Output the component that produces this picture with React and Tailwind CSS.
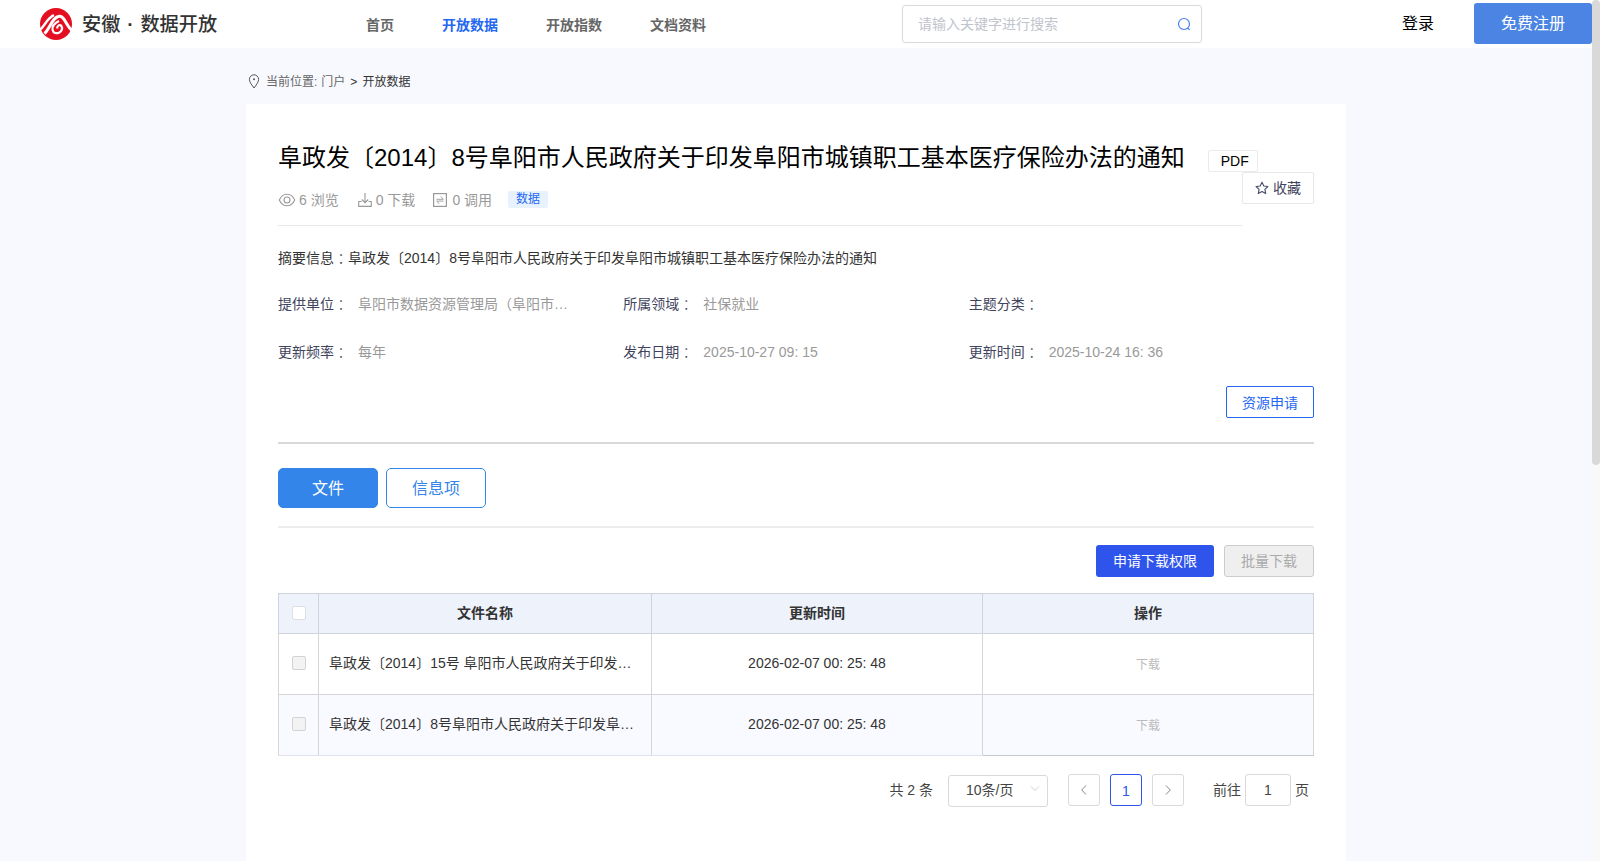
import React, { useState } from 'react';
import clsx from 'clsx';

const navItems = ['首页', '开放数据', '开放指数', '文档资料'];

const details = [
  { label: '提供单位', value: '阜阳市数据资源管理局（阜阳市…' },
  { label: '所属领域', value: '社保就业' },
  { label: '主题分类', value: '' },
  { label: '更新频率', value: '每年' },
  { label: '发布日期', value: '2025-10-27 09: 15' },
  { label: '更新时间', value: '2025-10-24 16: 36' },
];

const files = [
  {
    id: 1,
    name: '阜政发〔2014〕15号 阜阳市人民政府关于印发…',
    time: '2026-02-07 00: 25: 48',
  },
  {
    id: 2,
    name: '阜政发〔2014〕8号阜阳市人民政府关于印发阜…',
    time: '2026-02-07 00: 25: 48',
  },
];

function Logo() {
  return (
    <svg className="w-8 h-8 shrink-0" viewBox="0 0 32 32" fill="none">
      <circle cx="16" cy="16" r="16" fill="#e40f20" />
      <path d="M-1 22.500C4.500 19 6.500 10.500 14 7.200" stroke="#fff" strokeWidth="2.400" />
      <path
        d="M4.500 25.500C9.500 21.500 12.500 8.800 19.300 8.300C25 8 25.500 17.500 33 23.500"
        stroke="#fff"
        strokeWidth="3"
      />
      <path
        d="M19 13C15 15 11.800 18.500 12.600 22C13.300 25.200 16.500 25.800 19 24.700C22 23.400 22.800 20 21.300 17.800C19.800 16.200 17 17.300 17.200 20.500"
        stroke="#fff"
        strokeWidth="2.200"
      />
    </svg>
  );
}

function SearchIcon() {
  return (
    <svg className="w-3.5 h-3.5" viewBox="0 0 14 14" fill="none" stroke="#3f7bf2" strokeWidth="1.1">
      <circle cx="7" cy="7" r="5.500" />
      <path d="M10.500 11L12.700 12.900" />
    </svg>
  );
}

function PinIcon() {
  return (
    <svg className="w-3 h-[15px]" viewBox="0 0 12 15" fill="none" stroke="#555" strokeWidth="1">
      <path d="M6 14C4 11.200 1.400 8.200 1.400 5.400a4.600 4.600 0 0 1 9.200 0C10.600 8.200 8 11.200 6 14Z" />
      <circle cx="6" cy="5.300" r="1" fill="#555" stroke="none" />
    </svg>
  );
}

function EyeIcon() {
  return (
    <svg className="w-[18px] h-3.5" viewBox="0 0 18 14" fill="none" stroke="#999" strokeWidth="1.1">
      <path d="M1.300 7C3 3.200 5.800 1.200 9 1.200S15 3.200 16.700 7C15 10.800 12.200 12.800 9 12.800S3 10.800 1.300 7Z" />
      <circle cx="9" cy="7" r="3" />
    </svg>
  );
}

function DownloadIcon() {
  return (
    <svg className="w-3.5 h-3.5" viewBox="0 0 14 14" fill="none" stroke="#999" strokeWidth="1.1">
      <path d="M7 0V9.500M3.800 6.500L7 9.700L10.200 6.500M3.500 8.500H0.700V13.400H13.300V8.500H10.500" />
    </svg>
  );
}

function CallIcon() {
  return (
    <svg className="w-3.5 h-3.5" viewBox="0 0 14 14" fill="none" stroke="#999">
      <rect x="0.600" y="0.600" width="12.800" height="12.800" strokeWidth="1.200" />
      <path d="M3.500 6.300H10.300L7.800 3.500M10.500 8.100H3.700L6.200 10.900" strokeWidth="0.9" />
    </svg>
  );
}

function StarIcon() {
  return (
    <svg className="w-3.5 h-3.5" viewBox="0 0 14 14" fill="none" stroke="#454a66" strokeWidth="1.1" strokeLinejoin="round">
      <path d="M7 1.300L8.800 5L12.900 5.500L9.900 8.300L10.700 12.400L7 10.600L3.300 12.400L4.100 8.300L1.100 5.500L5.200 5Z" />
    </svg>
  );
}

function Chevron({ d, className }) {
  return (
    <svg className={clsx('w-3 h-3', className)} viewBox="0 0 12 12" fill="none" stroke="currentColor">
      <path d={d} />
    </svg>
  );
}

// The TC face sets the fullwidth colon in the middle of its box
function Colon() {
  return <span className="relative top-px font-['Noto_Sans_CJK_TC',sans-serif] font-light leading-none">：</span>;
}

function Checkbox({ disabled }) {
  return (
    <span
      className={clsx(
        'block w-3.5 h-3.5 rounded-[2px] border',
        disabled ? 'bg-[#f3f3f3] border-[#d3d3d3]' : 'bg-white border-[#dcdfe6]'
      )}
    />
  );
}

function Header() {
  return (
    <header className="flex h-12 bg-white">
      <div className="flex items-center w-[366px] pl-10">
        <Logo />
        <div className="flex ml-[10px] pt-px text-[19.2px] leading-6 font-medium text-[#333]">
          <span>安徽</span>
          <span className="w-5 text-center font-bold">·</span>
          <span>数据开放</span>
        </div>
      </div>
      <nav className="flex gap-12 w-[536px] pt-[15px] text-sm leading-5 font-bold text-[#666]">
        {navItems.map((item) => (
          <a key={item} className={clsx(item === '开放数据' && 'text-[#2468f2]')}>
            {item}
          </a>
        ))}
      </nav>
      <div className="flex items-center justify-between w-[300px] h-[38px] mt-[5px] pl-[15px] pr-2.5 border border-[#d9d9d9] rounded-[3px]">
        <span className="text-sm leading-5 text-[#c0c4cc]">请输入关键字进行搜索</span>
        <SearchIcon />
      </div>
      <div className="flex ml-auto text-base">
        <a className="mr-10 leading-[48px] text-black">登录</a>
        <button className="w-[118px] h-[41px] mt-[3px] rounded-[3px] bg-[#4b84e2] text-white">免费注册</button>
      </div>
    </header>
  );
}

function Summary() {
  return (
    <div className="flex items-start">
      <div className="w-[964px] h-[90px] shrink-0 border-b border-[#e8e8e8]">
        <div className="flex h-9 whitespace-nowrap">
          <h1 className="text-2xl leading-[44px] text-black">
            阜政发〔2014〕8号阜阳市人民政府关于印发阜阳市城镇职工基本医疗保险办法的通知
          </h1>
          <span className="ml-[23px] mt-[14px] w-[50px] h-[22px] shrink-0 pl-3 border border-[#ebebeb] rounded-[2px] text-sm leading-5 text-black">
            PDF
          </span>
        </div>
        <div className="flex items-center h-5 mt-[18px] text-sm leading-5 text-[#999]">
          <EyeIcon />
          <span className="ml-[3px]">6 浏览</span>
          <span className="ml-[19px]"><DownloadIcon /></span>
          <span className="ml-1">0 下载</span>
          <span className="ml-[18px]"><CallIcon /></span>
          <span className="ml-[5px]">0 调用</span>
          <span className="ml-4 mb-[2px] w-10 h-[17px] rounded-[2px] bg-[#e8f2ff] text-xs leading-[17px] text-center text-[#2468f2]">
            数据
          </span>
        </div>
      </div>
      <button className="flex items-center justify-center gap-1 w-[72px] h-8 mt-9 border border-[#e8e8e8] rounded-[2px] text-sm text-[#3f445e]">
        <StarIcon />
        收藏
      </button>
    </div>
  );
}

function FileTable() {
  return (
    <table className="w-full mt-4 table-fixed border-collapse text-sm text-[#333]">
      <colgroup>
        <col className="w-10" />
        <col className="w-[333px]" />
        <col className="w-[331px]" />
        <col />
      </colgroup>
      <thead>
        <tr className="h-10 bg-[#edf2fb]">
          <th className="border border-[#d0d3d9] pl-[13px] pb-[2px]"><Checkbox /></th>
          <th className="border border-[#d0d3d9] pb-[2px]">文件名称</th>
          <th className="border border-[#d0d3d9] pb-[2px]">更新时间</th>
          <th className="border border-[#d0d3d9] pb-[2px]">操作</th>
        </tr>
      </thead>
      <tbody>
        {files.map((file, index) => {
          const last = index === files.length - 1;
          const cell = clsx('border border-[#d6d6d8] pb-[2px]', last && 'border-b-[#dfe2ee]');

          return (
            <tr key={file.id} className="h-[61px] even:bg-[#f9faff]">
              <td className={clsx(cell, 'pl-[13px]')}><Checkbox disabled /></td>
              <td className={clsx(cell, 'pl-2.5 whitespace-nowrap')}>{file.name}</td>
              <td className={clsx(cell, 'text-center')}>{file.time}</td>
              <td
                className={clsx(
                  'border border-[#d6d6d8] pt-[2px] text-center text-xs text-[#bbb]',
                  last && 'border-b-[#c6c8d0]'
                )}
              >
                下载
              </td>
            </tr>
          );
        })}
      </tbody>
    </table>
  );
}

function Pagination() {
  const box = 'flex items-center justify-center h-8 border rounded-[3px]';

  return (
    <div className="flex justify-end h-[33px] mt-[18px] pr-[5px] text-sm leading-8 text-[#444]">
      <span className="mr-[15px]">共 2 条</span>
      <div className="flex justify-between w-[100px] h-8 mt-px mr-5 pl-[17px] pr-[6px] border border-[#d9d9d9] rounded-[3px]">
        <span className="leading-7">10条/页</span>
        <Chevron d="M2 3.500L6 7.500L10 3.500" className="mt-[7px] text-[#ccd0d8]" />
      </div>
      <div className="flex gap-2.5 mr-[29px]">
        <button className={clsx(box, 'w-8 border-[#d9d9d9] text-[#888]')}>
          <Chevron d="M8 1.500L3.700 6L8 10.500" />
        </button>
        <button className={clsx(box, 'w-8 pt-[2px] border-[#2f54eb] text-[#2f54eb]')}>1</button>
        <button className={clsx(box, 'w-8 border-[#d9d9d9] text-[#888]')}>
          <Chevron d="M4 1.500L8.300 6L4 10.500" />
        </button>
      </div>
      <span>前往</span>
      <span className={clsx(box, 'w-[46px] mx-1 border-[#d9d9d9]')}>1</span>
      <span>页</span>
    </div>
  );
}

export default function App() {
  const [activeTab, setActiveTab] = useState('文件');

  return (
    <div className="flex h-[861px] overflow-hidden bg-[#f7f9fe] font-['Liberation_Sans','Noto_Sans_CJK_SC',sans-serif]">
      <div className="flex flex-col w-[1592px]">
        <Header />

        <main className="flex flex-col grow w-[1100px] mx-auto">
          {/* Breadcrumb */}
          <div className="flex items-center h-14 pt-[10px] pl-[2px] text-xs text-[#666]">
            <PinIcon />
            <div className="flex pt-[2px]">
              <span className="ml-[6px]">当前位置:</span>
              <span className="ml-1">门户</span>
              <span className="mx-[5px] text-[#333]">&gt;</span>
              <span className="text-[#333]">开放数据</span>
            </div>
          </div>

          <div className="grow px-8 pt-8 bg-white">
            <Summary />

            <p className="mt-[22px] text-sm leading-5 text-[#333]">
              摘要信息<Colon />阜政发〔2014〕8号阜阳市人民政府关于印发阜阳市城镇职工基本医疗保险办法的通知
            </p>

            {/* Details */}
            <div className="grid grid-cols-3 mt-3 text-sm leading-[48px]">
              {details.map((item) => (
                <div key={item.label} className="flex h-12 whitespace-nowrap">
                  <span className="w-20 shrink-0 text-[#3f445e]">
                    {item.label}
                    <Colon />
                  </span>
                  <span className="text-[#999]">{item.value}</span>
                </div>
              ))}
            </div>

            <div className="flex justify-end mt-[10px] pb-6 border-b-2 border-[#d9d9d9]">
              <button className="w-[88px] h-8 pt-[2px] border border-[#2468f2] rounded-[2px] text-sm text-[#2468f2]">
                资源申请
              </button>
            </div>

            {/* Tabs */}
            <div className="flex gap-2 pt-6 pb-[18px] border-b-2 border-[#ededed]">
              {['文件', '信息项'].map((tab) => (
                <button
                  key={tab}
                  onClick={() => setActiveTab(tab)}
                  className={clsx(
                    'w-[100px] h-10 pt-[2px] border border-[#3385e9] rounded-[5px] text-base',
                    activeTab === tab ? 'bg-[#3385e9] text-white' : 'bg-white text-[#3385e9]'
                  )}
                >
                  {tab}
                </button>
              ))}
            </div>

            <div className="flex justify-end gap-2.5 mt-[17px] text-sm">
              <button className="w-[118px] h-8 rounded-[3px] bg-[#2f54eb] text-white">申请下载权限</button>
              <button className="w-[90px] h-8 border border-[#ccc] rounded-[3px] bg-[#efefef] text-[#aaa]">
                批量下载
              </button>
            </div>

            <FileTable />
            <Pagination />
          </div>
        </main>
      </div>

      {/* Scrollbar */}
      <div className="w-2 h-full bg-[#f9f9f9]">
        <div className="h-[465px] rounded-full bg-[#d9d9d9]" />
      </div>
    </div>
  );
}
